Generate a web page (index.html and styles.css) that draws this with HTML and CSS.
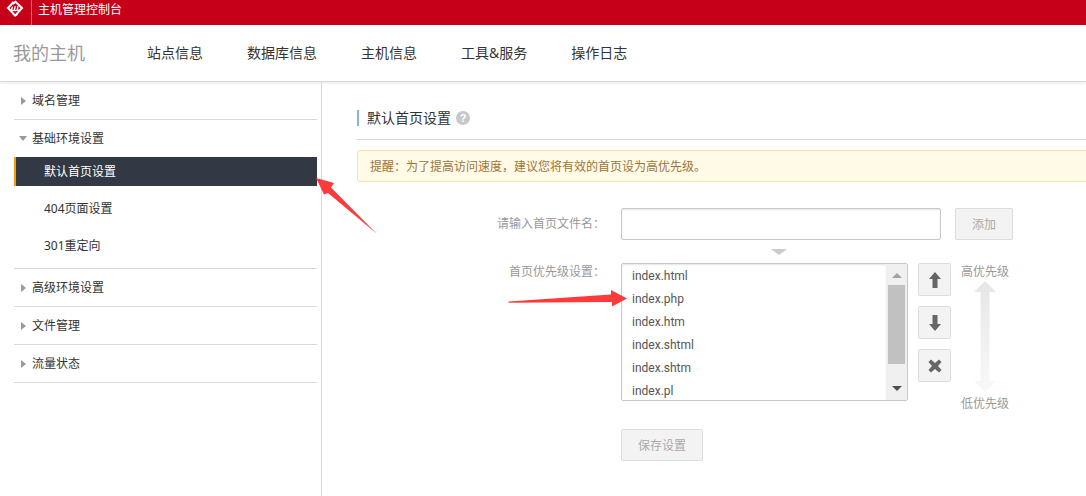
FILE: index.html
```
<!DOCTYPE html>
<html lang="zh-CN">
<head>
<meta charset="utf-8">
<title>主机管理控制台</title>
<link rel="stylesheet" href="styles.css">
</head>
<body>
<header class="topbar">
  <a class="logo" href="#" aria-label="首页">
    <svg width="18" height="18" viewBox="0 0 18 18" fill="none">
      <path d="M6.500 3.800 9.500 1.800 16 8 9 15.800" stroke="#fff" stroke-width="2"/>
      <path d="M7.500 2 2 8 9 15.500 11.500 14" stroke="#fff" stroke-width="2"/>
      <path d="M4.800 10.800 6.500 6.800 5.800 10.500Q7.500 11.500 8.200 9.500L9.200 6.200 8.600 10.200Q10.300 11.500 11.200 9.200L12 6 11.500 10Q12.500 11 13.600 9.500" stroke="#fff" stroke-width="1.100"/>
    </svg>
  </a>
  <span class="topbar-title">主机管理控制台</span>
</header>
<nav class="mainnav">
  <h1 class="brand">我的主机</h1>
  <a href="#">站点信息</a>
  <a href="#">数据库信息</a>
  <a href="#">主机信息</a>
  <a href="#">工具&amp;服务</a>
  <a href="#">操作日志</a>
</nav>
<div class="layout">
  <aside class="sidebar">
    <section class="group"><a class="group-head" href="#">域名管理</a></section>
    <section class="group">
      <a class="group-head open" href="#">基础环境设置</a>
      <div class="submenu">
        <a class="active" href="#">默认首页设置</a>
        <a href="#">404页面设置</a>
        <a href="#">301重定向</a>
      </div>
    </section>
    <section class="group"><a class="group-head" href="#">高级环境设置</a></section>
    <section class="group"><a class="group-head" href="#">文件管理</a></section>
    <section class="group"><a class="group-head" href="#">流量状态</a></section>
  </aside>
  <main class="content">
    <div class="heading">
      <h2>默认首页设置</h2>
      <a class="help" href="#">?</a>
    </div>
    <p class="notice">提醒：为了提高访问速度，建议您将有效的首页设为高优先级。</p>
    <form class="form">
      <label class="label" for="filename">请输入首页文件名：</label>
      <div class="row">
        <input class="filename" id="filename" type="text">
        <button class="btn" type="button">添加</button>
      </div>
      <span class="down-mark"></span>
      <label class="label list-label" for="priority">首页优先级设置：</label>
      <div class="row list-row">
        <div class="listbox">
          <select id="priority" size="6">
            <option>index.html</option>
            <option>index.php</option>
            <option>index.htm</option>
            <option>index.shtml</option>
            <option>index.shtm</option>
            <option>index.pl</option>
          </select>
          <div class="scroll">
            <span class="scroll-up"></span>
            <span class="thumb"></span>
            <span class="scroll-down"></span>
          </div>
        </div>
        <div class="tools">
          <button class="tool" type="button" aria-label="上移"><svg width="12" height="16" viewBox="0 0 12 16"><path d="M6 0 12 7H8.500V16H3.500V7H0Z"/></svg></button>
          <button class="tool" type="button" aria-label="下移"><svg width="12" height="16" viewBox="0 0 12 16"><path d="M6 16 12 9H8.500V0H3.500V9H0Z"/></svg></button>
          <button class="tool" type="button" aria-label="删除"><svg width="14" height="14" viewBox="0 0 14 14"><path d="M3 .5 7 4 11 .5 13.500 3 10 7 13.500 11 11 13.500 7 10 3 13.500.5 11 4 7 .5 3Z"/></svg></button>
        </div>
        <div class="scale">
          <span>高优先级</span>
          <svg width="22" height="111" viewBox="0 0 22 111">
            <defs><linearGradient id="fade" x1="0" y1="0" x2="0" y2="1"><stop offset="0" stop-color="#e6e6e6"/><stop offset="1" stop-color="#f9f9f9"/></linearGradient></defs>
            <path fill="url(#fade)" d="M11 0 22 11H15.500V100H22L11 111 0 100H6.500V11H0Z"/>
          </svg>
          <span>低优先级</span>
        </div>
      </div>
      <button class="btn save" type="submit">保存设置</button>
    </form>
  </main>
  <svg class="pointer pointer-menu" width="62" height="58" viewBox="0 0 62 58"><path d="M0 0 18 5 15 9.500 60.500 55.500 12 15 8 16.500Z"/></svg>
  <svg class="pointer pointer-list" width="120" height="18" viewBox="0 0 120 18"><path d="M119 8.500 103 0V4.500L1 11.500Q0 12.500 1 12.800L104 12V16.500Z"/></svg>
</div>
</body>
</html>
```
FILE: styles.css
```
* { box-sizing: border-box; }
body {
  margin: 0;
  min-height: 100vh;
  display: flex;
  flex-direction: column;
  overflow-x: hidden;
  background: #fff;
  color: #333;
  font: 12px/18px "Noto Sans", "Noto Sans CJK SC", sans-serif;
}
a { color: inherit; text-decoration: none; }
h1, h2, p { margin: 0; font-weight: normal; }
button, input, select { font: inherit; margin: 0; }

.topbar { display: flex; height: 25px; background: #c70019; color: #fff; }
.logo { width: 32px; padding-left: 6px; border-right: 1px solid #e0677a; }
.logo svg { display: block; }
.topbar-title { padding-left: 6px; line-height: 20px; }

.mainnav {
  display: flex;
  align-items: center;
  gap: 44px;
  height: 57px;
  padding-left: 13px;
  border-bottom: 1px solid #d9d9d9;
  box-shadow: 0 1px 3px #0000001a;
  font-size: 14px;
}
.brand { margin-right: 18px; color: #999; font-size: 18px; }

.layout { position: relative; display: flex; flex: 1; }
.sidebar { flex: 0 0 322px; padding: 0 4px 0 14px; border-right: 1px solid #d9d9d9; }
.group { border-bottom: 1px solid #d9d9d9; }
.group-head { display: flex; align-items: center; height: 37px; padding-left: 5px; }
.group-head::before {
  content: "";
  margin: 0 6px 0 2px;
  border: 4px solid transparent;
  border-left: 5px solid #999;
  border-right: 0;
}
.group-head.open::before {
  margin: 0 5px 0 0;
  border: 4px solid transparent;
  border-top: 5px solid #999;
  border-bottom: 0;
}
.submenu { display: flex; flex-direction: column; gap: 8px; padding-bottom: 8px; }
.submenu a { padding-left: 28px; border-left: 2px solid transparent; line-height: 29px; }
.submenu .active { background: #323844; border-left-color: #f90; color: #fff; }

.content { flex: 1; min-width: 0; padding: 20px 0 0 35px; }
.heading {
  display: flex;
  align-items: center;
  gap: 5px;
  height: 38px;
  padding-bottom: 6px;
  border-bottom: 1px solid #d9d9d9;
}
.heading h2 { padding-left: 8px; border-left: 2px solid #84b3dc; font-size: 14px; line-height: 16px; }
.help {
  width: 14px;
  height: 14px;
  border-radius: 50%;
  background: #c8c8c8;
  color: #fff;
  font: bold 11px/14px "Liberation Sans", sans-serif;
  text-align: center;
}
.notice {
  margin-top: 10px;
  padding: 7px 12px 5px;
  border: 1px solid #f8e3ab;
  border-right: 0;
  border-radius: 4px 0 0 4px;
  background: #fffbe6;
  color: #a07336;
}

.form {
  display: grid;
  grid-template-columns: 248px 1fr;
  column-gap: 16px;
  padding-top: 26px;
}
.label { color: #999; text-align: right; line-height: 32px; }
.row { display: flex; gap: 14px; }
.filename {
  width: 320px;
  height: 32px;
  padding: 0 10px;
  border: 1px solid #c8c8c8;
  border-radius: 2px;
  box-shadow: inset 0 1px 2px #0000001a;
}
.btn {
  height: 32px;
  padding: 2px 16px 0;
  border: 1px solid #ddd;
  border-radius: 2px;
  background: #f3f3f3;
  color: #aaa;
}
.down-mark {
  grid-column: 2;
  width: 0;
  margin: 9px 0 8px 150px;
  border: 8px solid transparent;
  border-top: 6px solid #ccc;
  border-bottom: 0;
}
.list-label { line-height: 18px; }
.list-row { gap: 10px; height: 138px; }
.listbox {
  display: flex;
  width: 287px;
  height: 138px;
  border: 1px solid #c8c8c8;
  border-radius: 2px;
  overflow: hidden;
}
.listbox select {
  flex: 1;
  min-width: 0;
  padding: 0;
  border: 0;
  outline: 0;
  background: #fff;
  color: #555;
  font-family: Roboto, "Noto Sans CJK SC", sans-serif;
  overflow: hidden;
  box-shadow: inset 0 1px 2px #0000001a;
}
.listbox option { min-height: 23px; padding: 5px 10px 0; line-height: 18px; }
.scroll {
  display: flex;
  flex-direction: column;
  align-items: center;
  width: 21px;
  background: #f0f0f0;
}
.scroll-up { margin: 9px 0 7px; border: 5px solid transparent; border-top: 0; border-bottom-color: #a3a3a3; }
.thumb { width: 17px; height: 79px; background: #c1c1c1; }
.scroll-down { margin: auto 0 9px; border: 5px solid transparent; border-bottom: 0; border-top-color: #505050; }
.tools { display: flex; flex-direction: column; gap: 10px; }
.tool {
  display: grid;
  place-items: center;
  width: 33px;
  height: 33px;
  padding: 0;
  border: 1px solid #ddd;
  border-radius: 2px;
  background: #f3f3f3;
  fill: #666;
}
.scale { display: flex; flex-direction: column; align-items: center; color: #999; }
.scale svg { flex: none; margin-bottom: 3px; }
.save { grid-column: 2; justify-self: start; margin-top: 28px; }

.pointer { position: absolute; fill: #fe3a3a; pointer-events: none; }
.pointer-menu { left: 316px; top: 96px; }
.pointer-list { left: 508px; top: 208px; }
```
